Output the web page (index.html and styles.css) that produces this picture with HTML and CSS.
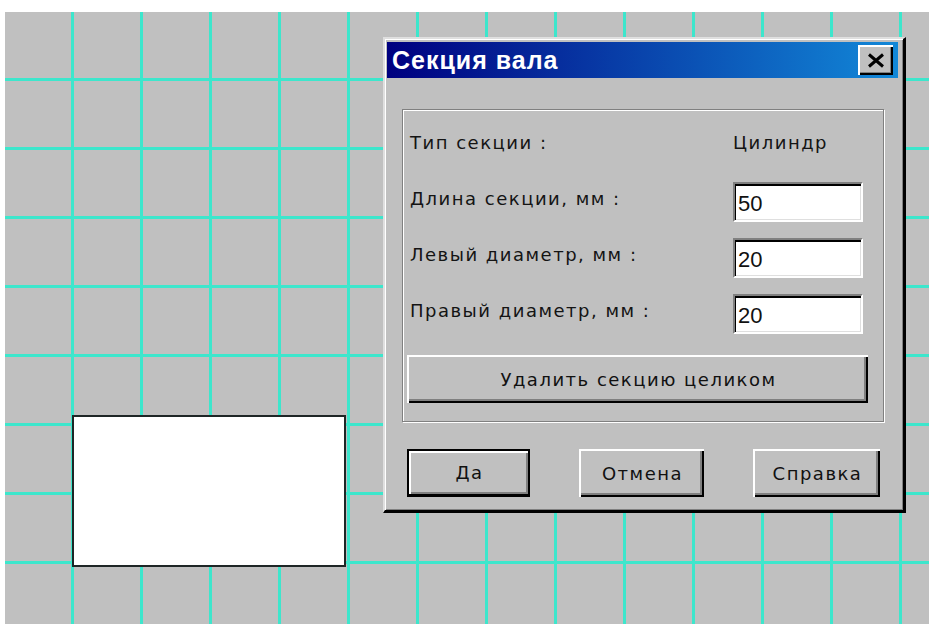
FILE: index.html
```html
<!DOCTYPE html>
<html lang="ru">
<head>
<meta charset="utf-8">
<title>Секция вала</title>
<link rel="stylesheet" href="styles.css">
</head>
<body>
<div class="desk">
  <div class="shape"></div>

  <div class="dialog">
    <div class="titlebar">
      <span class="title">Секция вала</span>
      <button class="close" type="button" aria-label="Закрыть">
        <svg width="18" height="15" viewBox="0 0 18 15">
          <path d="M2 1.5 L16 13.5 M16 1.5 L2 13.5" stroke="#000" stroke-width="3" fill="none"/>
        </svg>
      </button>
    </div>

    <div class="group">
      <div class="row row-type">
        <span class="label">Тип секции :</span>
        <span class="label">Цилиндр</span>
      </div>
      <div class="row">
        <label class="label" for="len">Длина секции, мм :</label>
        <input class="field" id="len" type="text" value="50">
      </div>
      <div class="row">
        <label class="label" for="dl">Левый диаметр, мм :</label>
        <input class="field" id="dl" type="text" value="20">
      </div>
      <div class="row">
        <label class="label" for="dr">Правый диаметр, мм :</label>
        <input class="field" id="dr" type="text" value="20">
      </div>
      <button class="btn btn-wide" type="button">Удалить секцию целиком</button>
    </div>

    <div class="actions">
      <button class="btn btn-default btn-ok" type="button">Да</button>
      <button class="btn btn-cancel" type="button">Отмена</button>
      <button class="btn btn-help" type="button">Справка</button>
    </div>
  </div>
</div>
</body>
</html>
```
FILE: styles.css
```css
* {
  box-sizing: border-box;
}

html,
body {
  margin: 0;
  background: #fff;
}

body {
  font-family: "DejaVu Sans", "Liberation Sans", sans-serif;
}

/* drawing area with the snap grid */
.desk {
  position: relative;
  margin: 12px 0 0 5px;
  height: 612px;
  overflow: hidden;
  background-color: #c0c0c0;
  background-image:
    linear-gradient(to right, transparent 66px, #3de6cc 66px, #3de6cc 69px, transparent 69px),
    linear-gradient(to bottom, transparent 66px, #3de6cc 66px, #3de6cc 69px, transparent 69px);
  background-size: 69px 69px;
}

/* a shape placed on the canvas */
.shape {
  position: absolute;
  left: 67px;
  top: 403px;
  width: 274px;
  height: 152px;
  background: #fff;
  border: 2px solid #1e2626;
}

/* modal window */
.dialog {
  position: absolute;
  left: 378px;
  top: 25px;
  width: 523px;
  display: flex;
  flex-direction: column;
  padding: 3px 5px 13px 2px;
  background: #c0c0c0;
  border-style: solid;
  border-width: 2px 3px 3px 2px;
  border-color: #dfdfdf #000 #000 #dfdfdf;
  box-shadow: inset 1px 1px #fff, inset -1px -1px #808080;
}

.titlebar {
  height: 36px;
  display: flex;
  align-items: center;
  justify-content: space-between;
  padding: 0 5px;
  background: linear-gradient(to right, #000080, #1288d8);
}

.title {
  color: #fff;
  font-family: "Liberation Sans", Arial, sans-serif;
  font-weight: bold;
  font-size: 25px;
  letter-spacing: 1px;
}

.close {
  width: 35px;
  height: 30px;
  padding: 0;
  display: flex;
  align-items: center;
  justify-content: center;
  background: #c0c0c0;
  border: 0;
  box-shadow: inset 2px 2px #fff, inset -2px -2px #000, inset -3px -3px #808080;
}

/* etched group frame */
.group {
  margin: 31px 14px 0 15px;
  padding: 12px 15px 18px 4px;
  display: flex;
  flex-direction: column;
  gap: 16px;
  border: 1px solid #808080;
  box-shadow: inset 1px 1px #fff, 1px 1px #fff;
}

.row {
  height: 40px;
  display: grid;
  grid-template-columns: 1fr 130px;
  align-items: center;
  padding: 0 5px 0 3px;
}

.row-type {
  margin-bottom: 4px;
}

.label {
  font-size: 18px;
  letter-spacing: 1.5px;
  color: #141414;
  white-space: nowrap;
  margin-top: -7px;
}

.row-type .label {
  margin-top: 0;
}

.field {
  width: 130px;
  height: 40px;
  padding: 3px 0 0 3px;
  font: 22px "Liberation Sans", Arial, sans-serif;
  color: #111;
  background: #fff;
  border-style: solid;
  border-width: 2px;
  border-color: #808080 #fff #fff #808080;
  box-shadow: inset 1px 2px #000, inset -1px -1px #dfdfdf;
  outline: none;
}

.btn {
  height: 48px;
  padding: 0 0 0 2px;
  font: 18px "DejaVu Sans", "Liberation Sans", sans-serif;
  letter-spacing: 1.5px;
  color: #111;
  background: #c0c0c0;
  border: 0;
  box-shadow: inset 2px 2px #fff, inset -2px -2px #000, inset -4px -4px #808080;
}

.btn-wide {
  margin-top: 5px;
}

.actions {
  display: flex;
  justify-content: space-between;
  margin: 27px 18px 0 20px;
}

.btn-ok {
  width: 123px;
}

.btn-cancel {
  width: 125px;
}

.btn-help {
  width: 127px;
}

.btn-default {
  border: 2px solid #000;
  border-bottom-width: 3px;
  box-shadow: inset 2px 2px #fff, inset -2px -2px #808080;
}
```
